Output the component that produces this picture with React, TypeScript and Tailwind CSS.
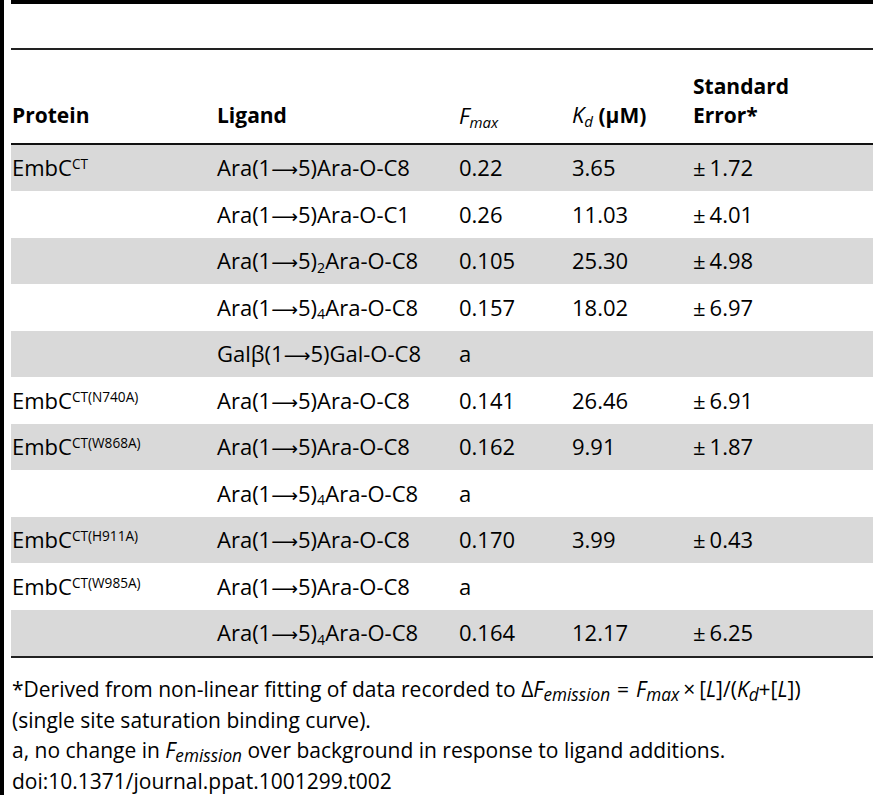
const font = "font-['Open_Sans','DejaVu_Sans',sans-serif]";

type Row = {
  protein?: string;
  ligand: React.ReactNode;
  fmax: string;
  kd?: string;
  se?: string;
};

const Arrow = () => <span className="font-['DejaVu_Sans',sans-serif] text-[0.85em]">⟶</span>;

function Ara({ n, end = "C8" }: { n?: string; end?: string }) {
  return (
    <>
      Ara(1<Arrow />5){n && <sub className="text-[0.65em]">{n}</sub>}Ara-O-{end}
    </>
  );
}

const rows: Row[] = [
  { protein: "CT", ligand: <Ara />, fmax: "0.22", kd: "3.65", se: "1.72" },
  { ligand: <Ara end="C1" />, fmax: "0.26", kd: "11.03", se: "4.01" },
  { ligand: <Ara n="2" />, fmax: "0.105", kd: "25.30", se: "4.98" },
  { ligand: <Ara n="4" />, fmax: "0.157", kd: "18.02", se: "6.97" },
  {
    ligand: (
      <>
        Galβ(1<Arrow />5)Gal-O-C8
      </>
    ),
    fmax: "a",
  },
  { protein: "CT(N740A)", ligand: <Ara />, fmax: "0.141", kd: "26.46", se: "6.91" },
  { protein: "CT(W868A)", ligand: <Ara />, fmax: "0.162", kd: "9.91", se: "1.87" },
  { ligand: <Ara n="4" />, fmax: "a" },
  { protein: "CT(H911A)", ligand: <Ara />, fmax: "0.170", kd: "3.99", se: "0.43" },
  { protein: "CT(W985A)", ligand: <Ara />, fmax: "a" },
  { ligand: <Ara n="4" />, fmax: "0.164", kd: "12.17", se: "6.25" },
];

function Sup({ children }: { children: React.ReactNode }) {
  return <sup className="relative -top-[0.5em] text-[0.62em]">{children}</sup>;
}

const sub = "text-[0.82em] italic";

export default function App() {
  return (
    <div className={`flex min-h-[800px] w-[873px] items-start bg-white text-black ${font}`}>
      <div className="mb-[5px] w-1 self-stretch bg-black" />
      <div className="flex-1 pl-[7px]">
        <div className="h-1 bg-black" />
        <div className="h-[44px]" />
        <div className="h-[2px] bg-[#222]" />

        <div className="flex h-[93px] items-end pb-[13px] pl-px text-[21px] font-bold leading-[29px]">
          <div className="w-[205px]">Protein</div>
          <div className="w-[242px]">Ligand</div>
          <div className="w-[113px] text-[22px] font-normal italic">
            F<sub className="text-[0.68em]">max</sub>
          </div>
          <div className="w-[121px]">
            <span className="text-[22px] font-normal italic">
              K<sub className="text-[0.68em]">d</sub>
            </span>{" "}
            (μM)
          </div>
          <div className="flex-1">
            Standard
            <br />
            Error*
          </div>
        </div>
        <div className="h-[1.5px] bg-[#111]" />

        <div className="text-[22px]">
          {rows.map((r, i) => (
            <div
              key={i}
              className={`flex h-[46.5px] items-center pl-px ${i % 2 === 0 ? "bg-[#d9d9d9]" : "bg-white"}`}
            >
              <div className="w-[205px] whitespace-nowrap">
                {r.protein && (
                  <>
                    EmbC<Sup>{r.protein}</Sup>
                  </>
                )}
              </div>
              <div className="w-[242px] whitespace-nowrap">{r.ligand}</div>
              <div className="w-[113px]">{r.fmax}</div>
              <div className="w-[121px]">{r.kd}</div>
              <div className="flex-1">
                {r.se && (
                  <>
                    <span className="mr-[4px]">±</span>
                    {r.se}
                  </>
                )}
              </div>
            </div>
          ))}
        </div>
        <div className="h-[2px] bg-[#222]" />

        <div className="pt-[16px] pl-px text-[21px] leading-[30.5px]">
          <p className="whitespace-nowrap">
            *Derived from non-linear fitting of data recorded to Δ<i>F</i>
            <sub className={sub}>emission</sub>
            <span className="mx-[7px]">=</span>
            <i>F</i>
            <sub className={sub}>max</sub>
            <span className="mx-[4px]">×</span>[<i>L</i>]/(<i>K</i>
            <sub className={sub}>d</sub>+[<i>L</i>])
          </p>
          <p>(single site saturation binding curve).</p>
          <p>
            a, no change in <i>F</i>
            <sub className={sub}>emission</sub> over background in response to ligand additions.
          </p>
          <p>doi:10.1371/journal.ppat.1001299.t002</p>
        </div>
      </div>
    </div>
  );
}
